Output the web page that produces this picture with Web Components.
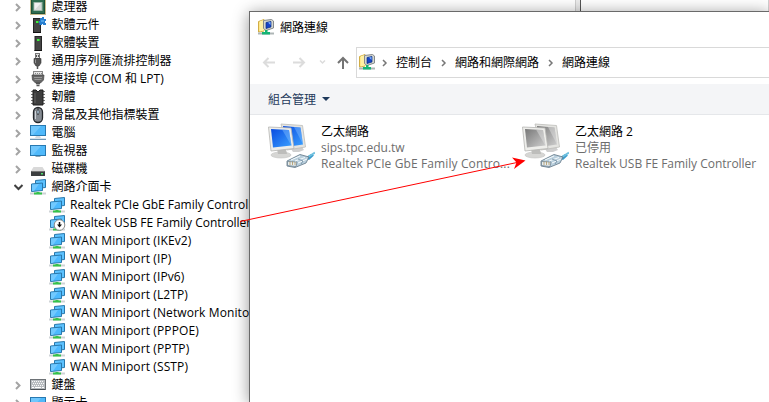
<!DOCTYPE html>
<html lang="zh-Hant">
<head>
<meta charset="utf-8">
<title>網路連線</title>
<style>
body {
    margin: 0;
    width: 769px;
    height: 402px;
    overflow: hidden;
    position: relative;
    background: #fff;
    color: #000;
    font-family: "Open Sans", "Noto Sans CJK TC", sans-serif;
    font-size: 12px;
    --latin-gap: .11px;
}
.realtek {
    --latin-gap: -.02px;
}
net-window {
    position: absolute;
    left: 249px;
    top: 11px;
}
back-edge {
    position: absolute;
    left: 575px;
    top: 0;
}
red-arrow {
    position: absolute;
    left: 0;
    top: 0;
}
</style>
</head>
<body>
<device-tree>
    <tree-row icon="cpu">處理器</tree-row>
    <tree-row icon="component">軟體元件</tree-row>
    <tree-row icon="software">軟體裝置</tree-row>
    <tree-row icon="usb">通用序列匯流排控制器</tree-row>
    <tree-row icon="port">連接埠 (COM 和 LPT)</tree-row>
    <tree-row icon="chip">韌體</tree-row>
    <tree-row icon="mouse">滑鼠及其他指標裝置</tree-row>
    <tree-row icon="computer">電腦</tree-row>
    <tree-row icon="monitor">監視器</tree-row>
    <tree-row icon="disk">磁碟機</tree-row>
    <tree-row icon="network" open>網路介面卡</tree-row>
    <tree-row icon="network" class="realtek" child>Realtek PCIe GbE Family Controller</tree-row>
    <tree-row icon="disabled" class="realtek" child>Realtek USB FE Family Controller</tree-row>
    <tree-row icon="network" child>WAN Miniport (IKEv2)</tree-row>
    <tree-row icon="network" child>WAN Miniport (IP)</tree-row>
    <tree-row icon="network" child>WAN Miniport (IPv6)</tree-row>
    <tree-row icon="network" child>WAN Miniport (L2TP)</tree-row>
    <tree-row icon="network" child>WAN Miniport (Network Monitor)</tree-row>
    <tree-row icon="network" child>WAN Miniport (PPPOE)</tree-row>
    <tree-row icon="network" child>WAN Miniport (PPTP)</tree-row>
    <tree-row icon="network" child>WAN Miniport (SSTP)</tree-row>
    <tree-row icon="keyboard">鍵盤</tree-row>
    <tree-row icon="monitor">顯示卡</tree-row>
</device-tree>
<back-edge></back-edge>
<net-window>
    <net-adapter>
        乙太網路
        <span slot="status">sips.tpc.edu.tw</span>
        <span slot="device">Realtek PCIe GbE Family Contro...</span>
    </net-adapter>
    <net-adapter class="realtek" off>
        乙太網路 2
        <span slot="status">已停用</span>
        <span slot="device">Realtek USB FE Family Controller</span>
    </net-adapter>
</net-window>
<red-arrow></red-arrow>

<script>
const NETWORK = `
    <path d="M5.500 1.500L15.500 .5V8.500L5.500 9.500Z" fill="#5cc2ff" stroke="#2a78ab"/>
    <path d="M1.500 5L12.500 4V11.500L1.500 12.500Z" fill="#4cb9ff" stroke="#2a78ab"/>
    <path d="M2 5.500L9 5L4 12H2Z" fill="#8ad4ff" opacity=".6"/>
    <path d="M0 14.500H16" stroke="#cfd3d6" stroke-width="2"/>
    <path d="M6.500 13H9.500V13.500H12V15.500H4V13.500H6.500Z" fill="#35c24a"/>`;

const ICONS = {
    cpu: `
        <rect x=".5" y="-.5" width="15" height="16" fill="#e8dcb0" stroke="#a18a3e" stroke-dasharray="1 1"/>
        <rect x="1.500" y=".5" width="13" height="14" fill="#2f6d4f" stroke="#1f5039"/>
        <rect x="4" y="3.500" width="8" height="8" fill="#d7dad8" stroke="#9fb8aa"/>
        <path d="M4.500 4H11L4.500 11Z" fill="#f1f1f1"/>`,
    component: `
        <rect x="3.500" y="1.500" width="7" height="14" fill="#454545" stroke="#252525"/>
        <path d="M3 15.500H11" stroke="#111"/>
        <rect x="6" y="4" width="2.500" height="2" fill="#3bf43b"/>
        <path d="M10 1H12V0H14V2H16V4H15V6H16V8H13V7H12V8H9.500V6H9V4H10Z" fill="#287fd0"/>
        <path d="M11 3H14V5H11Z" fill="#4fa2e6"/>`,
    software: `
        <rect x="5" y="1.500" width="6.500" height="14" fill="#454545" stroke="#252525"/>
        <path d="M4.500 15.500H12" stroke="#111"/>
        <rect x="7" y="4" width="2.500" height="2" fill="#3bf43b"/>`,
    usb: `
        <rect x="5.500" y=".5" width="4" height="5" fill="#ddd" stroke="#777"/>
        <path d="M6.500 2V4M8.500 2V4" stroke="#555"/>
        <path d="M4 5.500H11V10L9 13H6L4 10Z" fill="#555" stroke="#333" stroke-width=".6"/>
        <path d="M5.500 6.500V10" stroke="#999"/>
        <path d="M7.500 12V16" stroke="#555" stroke-width="1.500"/>`,
    port: `
        <rect x="3.500" y=".5" width="9" height="4" fill="#e6e6e6" stroke="#888"/>
        <path d="M5 2.500H12" stroke="#888" stroke-dasharray="1 1"/>
        <path d="M2 4H14L13.500 9L10.500 12H5.500L2.500 9Z" fill="#666" stroke="#444" stroke-width=".7"/>
        <path d="M4 6.500H12M4.500 8.500H11.500" stroke="#999"/>
        <path d="M6 12.500H10M6.500 14.500H9.500" stroke="#555" stroke-width="1.500"/>`,
    chip: `
        <path d="M1 2.500H15M1 5.500H15M1 8.500H15M1 11.500H15M1 14.500H15" stroke="#777"/>
        <path d="M3 1H6L8 3L10 1H13V16H3Z" fill="#3e3e3e" stroke="#1f1f1f"/>
        <path d="M5 4V14" stroke="#626262"/>`,
    mouse: `
        <rect x="3.500" y=".5" width="9" height="15" rx="4.500" fill="#858b92" stroke="#24272b" stroke-width="1.300"/>
        <path d="M5.500 4V12" stroke="#cfd4d9"/>
        <path d="M8 1V8" stroke="#333"/>
        <rect x="7" y="3" width="2" height="4" rx="1" fill="#b8d4ea" stroke="#333" stroke-width=".6"/>`,
    computer: `
        <rect x=".5" y=".5" width="15" height="10" fill="#50b9fa" stroke="#2779b1"/>
        <path d="M1 1H11L3 10H1Z" fill="#8bd4ff" opacity=".55"/>
        <path d="M6 11H10L11 13H5Z" fill="#d5dbdf"/>
        <path d="M0 14.500H16" stroke="#7299b5"/>
        <path d="M0 13.500H16" stroke="#d5e3ed"/>`,
    monitor: `
        <rect x=".5" y="2.500" width="15" height="10" fill="#50b9fa" stroke="#2779b1"/>
        <path d="M1 3H11L3 12H1Z" fill="#8bd4ff" opacity=".55"/>
        <path d="M5.500 13.500H10.500" stroke="#8ca5b4"/>`,
    disk: `
        <path d="M3.500 6H12.500L15 10H1Z" fill="#d9d9d9"/>
        <rect x="1" y="10" width="14" height="5" rx=".5" fill="#3c3f40"/>
        <path d="M1.500 10.500H14.500" stroke="#777"/>
        <rect x="11" y="12" width="2" height="1.500" fill="#4be06b"/>`,
    network: NETWORK,
    disabled: NETWORK + `
        <circle cx="10.500" cy="10" r="5.300" fill="#fff" stroke="#8a8a8a"/>
        <path d="M10.500 7V11" stroke="#111" stroke-width="1.500"/>
        <path d="M8 9.500H13L10.500 12.500Z" fill="#111"/>`,
    keyboard: `
        <rect x=".5" y="2.500" width="15" height="10" fill="#b8bcc0" stroke="#6d7276"/>
        <path d="M2 4.500H14M3 6.500H14M2 8.500H14" stroke="#f9f9f9" stroke-dasharray="1 1"/>
        <path d="M2 10.500H4M5 10.500H11M12 10.500H14" stroke="#fff"/>
        <path d="M1 12.500H15" stroke="#4b5054"/>`,
    folder: `
        <path d="M.5 2.500L6 .5V12L.5 13Z" fill="#ffe889" stroke="#d1ad45"/>
        <path d="M2 2L7 1V11L2 12.500Z" fill="#fff0a4"/>
        <path d="M5.500 1.500L13.500 .5L15.500 2V9L8 11.500L5.500 9.500Z" fill="#d5d7d1" stroke="#85898a"/>
        <path d="M8 3.500L13 2.500V8L8 9.500Z" fill="#1643c6" stroke="#082e82" stroke-width=".7"/>
        <path d="M10 3.500L12.500 3V6Z" fill="#7fb3ff"/>
        <path d="M0 14.500H16" stroke="#aeb6b6" stroke-width="2"/>
        <path d="M7 11H9.500V13H12V15.500H4V13H7Z" fill="#15b474"/>`
};

function icon(name) {
    return `<svg class="icon" width="16" height="16" viewBox="0 0 16 16" overflow="visible">${ICONS[name]}</svg>`;
}

class DeviceTree extends HTMLElement {
    constructor() {
        super();
        this.attachShadow({mode: "open"}).innerHTML = `
        <style>
        :host {
            display: flex;
            flex-direction: column;
            margin-top: -2px;
            width: 250px;
            height: 404px;
            overflow: hidden;
        }
        </style>
        <slot></slot>`;
    }
}

class TreeRow extends HTMLElement {
    constructor() {
        super();
        this.attachShadow({mode: "open"});
    }

    connectedCallback() {
        let arrow = `<path d="M2 3L5.500 6.500L2 10" fill="none" stroke="#a4a4a4" stroke-width="2"/>`;
        if (this.hasAttribute("open")) {
            arrow = `<path d="M.5 4L4.500 8L8.500 4" fill="none" stroke="#404040" stroke-width="2"/>`;
        }
        if (this.hasAttribute("child")) {
            arrow = "";
        }
        this.shadowRoot.innerHTML = `
        <style>
        :host {
            display: flex;
            align-items: center;
            flex: none;
            height: 18px;
            padding-left: 14px;
            white-space: nowrap;
        }
        :host([child]) {
            padding-left: 33px;
            letter-spacing: var(--latin-gap);
        }
        svg {
            flex: none;
        }
        .icon {
            margin-left: 6px;
        }
        .label {
            flex: none;
            margin-left: 5.500px;
            line-height: 18px;
        }
        :host([child]) .label {
            margin-left: 5px;
        }
        </style>
        <svg width="10" height="12">${arrow}</svg>
        ${icon(this.getAttribute("icon"))}
        <span class="label"><slot></slot></span>`;
    }
}

// edge of the windows that lie behind the connections window
class BackEdge extends HTMLElement {
    constructor() {
        super();
        this.attachShadow({mode: "open"}).innerHTML = `
        <style>
        :host {
            display: block;
            box-sizing: border-box;
            width: 194px;
            height: 11px;
            border-left: 1px solid #d0d0d0;
            border-right: 1px solid #d0d0d0;
        }
        div {
            width: 4px;
            height: 11px;
            background: #ececec;
            border-right: 1px solid #555;
        }
        </style>
        <div></div>`;
    }
}

class NetWindow extends HTMLElement {
    constructor() {
        super();
        const crumb = `<svg width="6" height="8"><path d="M1 1L4 4L1 7" fill="none" stroke="#777" stroke-width="1.500"/></svg>`;
        this.attachShadow({mode: "open"}).innerHTML = `
        <style>
        :host {
            display: flex;
            flex-direction: column;
            box-sizing: border-box;
            width: 520px;
            height: 391px;
            background: #fff;
            border: solid #6a6a6a;
            border-width: 1px 0 0 1px;
            box-shadow: 0 2px 15px rgba(0, 0, 0, .42);
        }
        svg {
            flex: none;
        }
        header {
            display: flex;
            align-items: center;
            gap: 6px;
            height: 30px;
            padding-left: 8px;
        }
        nav {
            display: flex;
            align-items: center;
            height: 31px;
            margin-top: 5px;
        }
        .address {
            display: flex;
            align-items: center;
            flex: 1;
            box-sizing: border-box;
            height: 31px;
            padding-left: 2px;
            border: solid #d9d9d9;
            border-width: 1px 0 1px 1px;
        }
        .address .icon {
            margin: 0 7px 2px 0;
        }
        .address span {
            margin: 0 9px 2px 8px;
        }
        .toolbar {
            display: flex;
            align-items: center;
            gap: 6px;
            box-sizing: border-box;
            height: 31px;
            margin-top: 6px;
            padding-left: 18px;
            background: #f4f5f7;
            border-bottom: 1px solid #e5e7ea;
            color: #1e395b;
        }
        .items {
            display: grid;
            grid-template-columns: 254px 248px;
            padding: 8px 0 0 17px;
        }
        </style>
        <header>${icon("folder")}<span>網路連線</span></header>
        <nav>
            <svg width="106" height="31" fill="none" stroke-width="2">
                <path d="M25 15.500H14M18.500 11L14 15.500L18.500 20M43 15.500H54M49.500 11L54 15.500L49.500 20" stroke="#dcdcdc"/>
                <path d="M70 13.500L72.500 16L75 13.500" stroke="#dcdcdc" stroke-width="1.500"/>
                <path d="M93 22V11M88 16L93 11L98 16" stroke="#747474"/>
            </svg>
            <div class="address">
                ${icon("folder")}
                ${crumb}<span>控制台</span>
                ${crumb}<span>網路和網際網路</span>
                ${crumb}<span>網路連線</span>
            </div>
        </nav>
        <div class="toolbar">
            <span>組合管理</span>
            <svg width="8" height="4"><path d="M0 0H8L4 4Z" fill="#1e395b"/></svg>
        </div>
        <div class="items"><slot></slot></div>`;
    }
}

class NetAdapter extends HTMLElement {
    constructor() {
        super();
        this.attachShadow({mode: "open"});
    }

    connectedCallback() {
        const off = this.hasAttribute("off");
        const id = off ? "off" : "on";
        const dark = off ? "#777" : "#0a4be0";
        const light = off ? "#cfcfcf" : "#3aa0ff";
        const shine = off ? "#e6e6e6" : "#83bfff";
        this.shadowRoot.innerHTML = `
        <style>
        :host {
            display: flex;
            height: 48px;
            white-space: nowrap;
        }
        svg {
            flex: none;
            margin-right: 6px;
        }
        .text {
            display: flex;
            flex-direction: column;
            padding-top: 1px;
            line-height: 16px;
            color: #6d6d6d;
        }
        .text div {
            height: 16px;
        }
        .text .name {
            color: #000;
        }
        .device {
            letter-spacing: var(--latin-gap);
        }
        </style>
        <svg width="48" height="48" viewBox="0 0 48 48">
            <defs>
                <linearGradient id="${id}" x1="0" y1="0" x2="1" y2="1">
                    <stop offset="0" stop-color="${dark}"/>
                    <stop offset="1" stop-color="${light}"/>
                </linearGradient>
            </defs>
            <path d="M24 26L35 24L37 27L32 29H26Z" fill="#cfcfcf"/>
            <path d="M14 1L35.500 2.500L38.500 24L20 27Z" fill="#e4e4e1" stroke="#bcbcb9" stroke-width=".8"/>
            <path d="M16 3L33.500 4.500L36 21.500L19 24Z" fill="url(#${id})"/>
            <path d="M27 4L33.500 4.500L36 21.500Z" fill="${shine}" opacity=".45"/>
            <ellipse cx="14" cy="32" rx="10" ry="3" fill="#d6d6d4" stroke="#c1c1bf" stroke-width=".6"/>
            <path d="M10 26H19L20 31H11Z" fill="#bdbdbb"/>
            <path d="M1.500 4L24 5L27 25.500L4 28Z" fill="#eeeeeb" stroke="#b5b5b2" stroke-width=".8"/>
            <path d="M4 6L22 7L24.500 22.500L6 24.500Z" fill="url(#${id})"/>
            <path d="M4 6L15 6.500L24 22L24.500 22.500L22 7Z" fill="${shine}" opacity=".45"/>
            <path d="M38 35L44 31L47 32.500L42 37Z" fill="#3b9ccc"/>
            <path d="M41 34L48 29.500" stroke="#6fc0df" stroke-width="2"/>
            <path d="M20 38L33 31.500L42 34L39 40L28 44.500L20 43Z" fill="#b9cfdd" stroke="#5e7484" stroke-width=".8"/>
            <path d="M20.500 38.500L30 39L29 43.500L20.500 42.500Z" fill="#e6edf0" stroke="#657986" stroke-width=".7"/>
            <path d="M23 38.500V42M25.500 38.500V42M28 39V42" stroke="#ae9561" stroke-width=".8"/>
            <path d="M24 37L33 33M28 38L38 34.500M31 40L40 36" stroke="#f5fafc"/>
            <path d="M31 36L36 38L34 41" fill="none" stroke="#6c899d" stroke-width=".8"/>
        </svg>
        <div class="text">
            <div class="name"><slot></slot></div>
            <div><slot name="status"></slot></div>
            <div class="device"><slot name="device"></slot></div>
        </div>`;
    }
}

class RedArrow extends HTMLElement {
    constructor() {
        super();
        this.attachShadow({mode: "open"}).innerHTML = `
        <style>
        :host {
            display: block;
            pointer-events: none;
        }
        svg {
            display: block;
        }
        </style>
        <svg width="530" height="230">
            <path d="M240 221.500L517 162.500" stroke="#f00" stroke-width="1"/>
            <path d="M525.500 160.500L512 157.500L516.500 162.500L514 169Z" fill="#f00"/>
        </svg>`;
    }
}

customElements.define("device-tree", DeviceTree);
customElements.define("tree-row", TreeRow);
customElements.define("back-edge", BackEdge);
customElements.define("net-window", NetWindow);
customElements.define("net-adapter", NetAdapter);
customElements.define("red-arrow", RedArrow);
</script>
</body>
</html>
